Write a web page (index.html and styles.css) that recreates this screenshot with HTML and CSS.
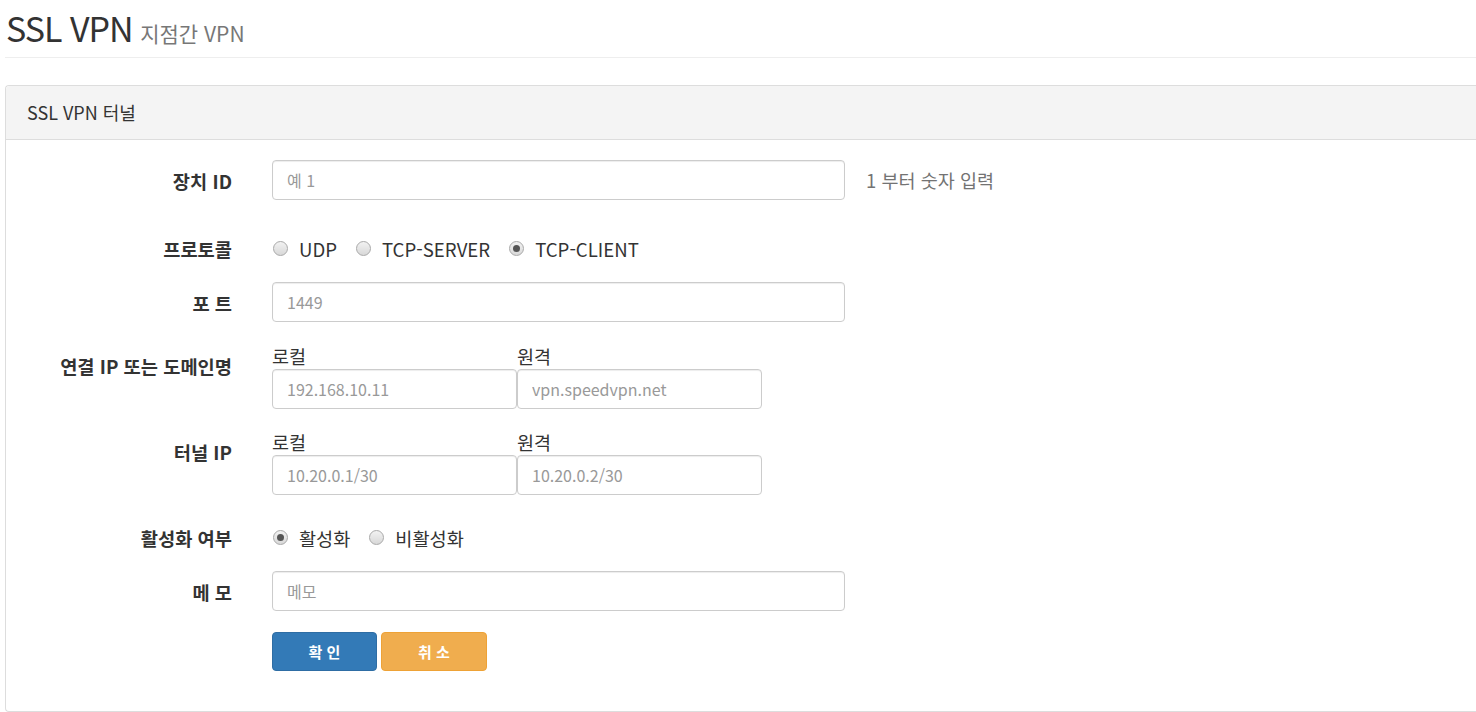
FILE: index.html
```html
<!DOCTYPE html>
<html lang="ko">
<head>
<meta charset="utf-8">
<title>SSL VPN</title>
<link rel="stylesheet" href="styles.css">
</head>
<body>
<div class="page">
  <div class="page-header">
    <h1 class="title"><span class="title-main">SSL VPN</span> <small class="subtitle">지점간 VPN</small></h1>
  </div>
  <div class="panel">
    <div class="panel-heading">SSL VPN 터널</div>
    <form class="panel-body">
      <div class="row row-id">
        <label class="row-label">장치 ID</label>
        <div class="controls">
          <input class="field field-wide" type="text" placeholder="예 1">
          <span class="help">1 부터 숫자 입력</span>
        </div>
      </div>
      <div class="row row-radio row-proto">
        <label class="row-label">프로토콜</label>
        <div class="controls radios">
          <label class="radio"><input type="radio" name="proto"><span>UDP</span></label>
          <label class="radio"><input type="radio" name="proto"><span>TCP-SERVER</span></label>
          <label class="radio"><input type="radio" name="proto" checked><span>TCP-CLIENT</span></label>
        </div>
      </div>
      <div class="row row-port">
        <label class="row-label">포 트</label>
        <div class="controls">
          <input class="field field-wide" type="text" placeholder="1449">
        </div>
      </div>
      <div class="row row-pair row-conn">
        <label class="row-label label-top">연결 IP 또는 도메인명</label>
        <div class="controls pair">
          <div class="pair-item">
            <div class="sub-label">로컬</div>
            <input class="field field-half" type="text" placeholder="192.168.10.11">
          </div>
          <div class="pair-item">
            <div class="sub-label">원격</div>
            <input class="field field-half" type="text" placeholder="vpn.speedvpn.net">
          </div>
        </div>
      </div>
      <div class="row row-pair row-tunnel">
        <label class="row-label label-top">터널 IP</label>
        <div class="controls pair">
          <div class="pair-item">
            <div class="sub-label">로컬</div>
            <input class="field field-half" type="text" placeholder="10.20.0.1/30">
          </div>
          <div class="pair-item">
            <div class="sub-label">원격</div>
            <input class="field field-half" type="text" placeholder="10.20.0.2/30">
          </div>
        </div>
      </div>
      <div class="row row-radio row-active">
        <label class="row-label">활성화 여부</label>
        <div class="controls radios">
          <label class="radio"><input type="radio" name="active" checked><span>활성화</span></label>
          <label class="radio"><input type="radio" name="active"><span>비활성화</span></label>
        </div>
      </div>
      <div class="row row-memo">
        <label class="row-label">메 모</label>
        <div class="controls">
          <input class="field field-wide" type="text" placeholder="메모">
        </div>
      </div>
      <div class="row row-buttons">
        <span class="row-label"></span>
        <div class="controls buttons">
          <button type="button" class="btn btn-primary">확 인</button>
          <button type="button" class="btn btn-warning">취 소</button>
        </div>
      </div>
    </form>
  </div>
</div>
</body>
</html>
```
FILE: styles.css
```css
* { box-sizing: border-box; }
html, body {
  margin: 0;
  padding: 0;
  background: #fff;
  overflow: hidden;
}
body {
  font-family: "Noto Sans CJK KR", "Noto Sans", sans-serif;
  color: #333;
}
.page {
  padding-left: 5px;
}
.page-header {
  border-bottom: 1px solid #eee;
  height: 58px;
}
.title {
  margin: 0;
  padding: 4px 0 0 1px;
  font-size: 34px;
  font-weight: 400;
  line-height: 48px;
  color: #333;
}
.title-main {
  letter-spacing: -1px;
}
.subtitle {
  font-size: 21px;
  color: #777;
  font-weight: 400;
  margin-left: -2px;
}
.panel {
  margin-top: 27px;
  border: 1px solid #ddd;
  border-right: 0;
  border-radius: 4px 0 0 4px;
  height: 627px;
}
.panel-heading {
  background: #f4f4f4;
  border-bottom: 1px solid #ddd;
  height: 54px;
  padding-left: 21px;
  font-size: 18px;
  line-height: 52px;
  color: #333;
  border-radius: 4px 0 0 0;
}
.panel-body {
  margin: 0;
  padding-top: 20px;
}
.row {
  display: flex;
  align-items: center;
}
.row-label {
  width: 226px;
  flex: none;
  text-align: right;
  font-size: 18.7px;
  font-weight: 700;
  color: #333;
  margin-right: 40px;
  line-height: 24px;
  padding-top: 2px;
}
.label-top {
  align-self: flex-start;
  padding-top: 10px;
}
.controls {
  display: flex;
  align-items: center;
}
.field {
  height: 40px;
  border: 1px solid #ccc;
  border-radius: 4px;
  padding: 0 14px;
  font-family: "Noto Sans CJK KR", "Noto Sans", sans-serif;
  font-size: 16px;
  color: #555;
  background: #fff;
  box-shadow: inset 0 1px 1px rgba(0,0,0,.075);
  outline: none;
}
.field::placeholder { color: #999; }
.field-wide { width: 573px; }
.field-half { width: 245px; }
.help {
  margin-left: 21px;
  font-size: 18.5px;
  color: #737373;
}
.row-radio { height: 34px; }
.row-proto { margin-top: 31px; }
.row-port { margin-top: 17px; }
.row-conn { margin-top: 22px; }
.row-tunnel { margin-top: 21px; }
.row-active { margin-top: 25px; }
.row-memo { margin-top: 17px; }
.row-buttons { margin-top: 21px; }
.radios { gap: 18px; }
.radio {
  display: flex;
  align-items: center;
  font-size: 18.6px;
  color: #333;
}
.radio input {
  -webkit-appearance: none;
  appearance: none;
  width: 15px;
  height: 15px;
  margin: 0 11px 0 1px;
  border: 1px solid #a9a9a9;
  border-radius: 50%;
  background: linear-gradient(#f2f2f2, #d8d8d8);
  position: relative;
}
.radio input:checked::after {
  content: "";
  position: absolute;
  left: 3px;
  top: 3px;
  width: 7px;
  height: 7px;
  border-radius: 50%;
  background: #555;
}
.pair { align-items: flex-start; }
.pair-item { display: flex; flex-direction: column; }
.sub-label {
  font-size: 18.5px;
  line-height: 24px;
  margin-bottom: 1px;
  color: #333;
}
.buttons { gap: 4px; }
.btn {
  height: 39px;
  width: 105px;
  border-radius: 4px;
  font-family: "Noto Sans CJK KR", "Noto Sans", sans-serif;
  font-size: 15px;
  font-weight: 700;
  color: #fff;
  cursor: pointer;
}
.btn-primary { background: #337ab7; border: 1px solid #2e6da4; }
.btn-warning { background: #f0ad4e; border: 1px solid #eea236; width: 106px; }
```
